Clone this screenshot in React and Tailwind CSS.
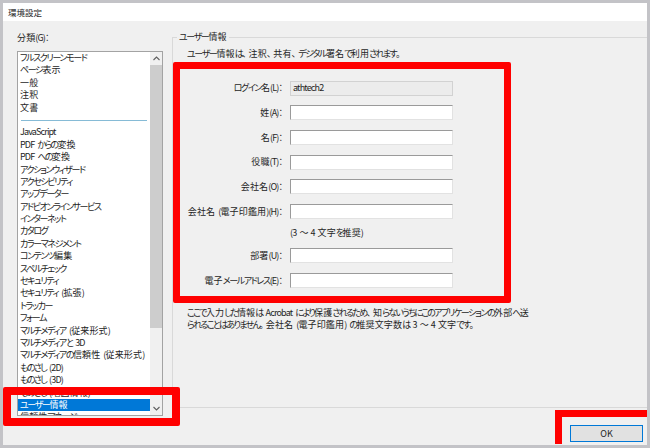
import React from 'react';

const categories = [
  'フルスクリーンモード',
  'ページ表示',
  '一般',
  '注釈',
  '文書',
  '---',
  'JavaScript',
  'PDF からの変換',
  'PDF への変換',
  'アクションウィザード',
  'アクセシビリティ',
  'アップデーター',
  'アドビオンラインサービス',
  'インターネット',
  'カタログ',
  'カラーマネジメント',
  'コンテンツ編集',
  'スペルチェック',
  'セキュリティ',
  'セキュリティ (拡張)',
  'トラッカー',
  'フォーム',
  'マルチメディア (従来形式)',
  'マルチメディアと 3D',
  'マルチメディアの信頼性 (従来形式)',
  'ものさし (2D)',
  'ものさし (3D)',
  'ものさし (地図情報)',
  'ユーザー情報',
  '信頼性マネージャー',
];

const fields = [
  { label: 'ログイン名(L)：', value: 'athtech2', disabled: true },
  { label: '姓(A)：' },
  { label: '名(F)：' },
  { label: '役職(T)：' },
  { label: '会社名(O)：' },
  { label: '会社名 (電子印鑑用)(H)：', hint: '(3 ～ 4 文字を推奨)' },
  { label: '部署(U)：' },
  { label: '電子メールアドレス(E)：' },
];

const runClass = (ch) => {
  if (/[\u4e00-\u9fff]/.test(ch)) return 'tracking-[0.15px]';
  if (/[\u3040-\u309f]/.test(ch)) return 'tracking-[-1.7px]';
  if (/[\u30a0-\u30ff]/.test(ch)) return 'tracking-[-1.4px]';
  if (ch === '～') return 'tracking-[-1px]';
  if (/[\u3000-\u303f\uff00-\uffef]/.test(ch)) return 'tracking-[2px]';
  if (ch === ' ') return 'tracking-[1px]';
  return 'tracking-[-0.85px]';
};

const Jp = ({ text }) => {
  const runs = [];
  for (const ch of text) {
    const cls = runClass(ch);
    const last = runs[runs.length - 1];
    if (last && last.cls === cls) last.text += ch;
    else runs.push({ cls, text: ch });
  }
  return runs.map((r, i) => (
    <span key={i} className={r.cls}>
      {r.text}
    </span>
  ));
};

const Chevron = ({ up }) => (
  <svg width="7" height="5" viewBox="0 0 7 5" fill="none">
    <polyline
      points={up ? '0.5,4 3.5,1 6.5,4' : '0.5,1 3.5,4 6.5,1'}
      stroke="#5f5f5f"
      strokeWidth="1.1"
    />
  </svg>
);

const App = () => {
  return (
    <div className="relative h-[448px] w-[650px] overflow-hidden bg-[#c3c3c7] p-[3px] font-['Noto_Sans_CJK_JP',sans-serif] text-[9px] text-[#1e1e1e] [font-feature-settings:'palt']">
      <div className="flex h-full flex-col bg-[#f0f0f0]">
        {/* title bar */}
        <div className="flex h-[18px] items-center bg-white pl-[5px] text-[8.5px]">環境設定</div>

        <div className="flex">
          {/* category list */}
          <div className="flex flex-col pl-[14px] pt-[11px]">
            <div className="h-[12px] leading-[12px]">
              <Jp text="分類(G)：" />
            </div>
            <div className="mt-[7px] flex h-[365px] w-[146px] border border-[#a3a3a3] bg-white">
              <div className="w-[132px] overflow-hidden">
                {categories.map((c, i) =>
                  c === '---' ? (
                    <div key={i} className="flex h-[12.4px] items-center px-[3px]">
                      <div className="h-[1px] w-full bg-[#86bbd6]" />
                    </div>
                  ) : (
                    <div
                      key={i}
                      className={
                        c === 'ユーザー情報'
                          ? 'h-[12.4px] whitespace-nowrap bg-[#0078d7] pl-[2px] leading-[12.4px] text-white'
                          : 'h-[12.4px] whitespace-nowrap pl-[2px] leading-[12.4px]'
                      }
                    >
                      <Jp text={c} />
                    </div>
                  )
                )}
              </div>
              <div className="flex w-[12px] flex-col bg-[#f0f0f0]">
                <div className="flex h-[13px] items-center justify-center">
                  <Chevron up />
                </div>
                <div className="h-[263px] bg-[#cdcdcd]" />
                <div className="flex-1" />
                <div className="flex h-[13px] items-center justify-center">
                  <Chevron />
                </div>
              </div>
            </div>
          </div>

          {/* user info group */}
          <fieldset className="ml-[9px] mt-[10px] h-[377px] flex-1 border-y border-l border-[#d9d9d9]">
            <legend className="ml-[4px] px-[2px] leading-[12px]">
              <Jp text="ユーザー情報" />
            </legend>
            <div className="mt-[5px] pl-[14px] leading-[12px]">
              <Jp text="ユーザー情報は、注釈、共有、デジタル署名で利用されます。" />
            </div>

            <div className="mt-[20.5px] flex flex-col gap-[9.7px]">
              {fields.map((f) => (
                <React.Fragment key={f.label}>
                  <div className="flex h-[15px] items-center gap-[5px]">
                    <div className="w-[112px] whitespace-nowrap text-right">
                      <Jp text={f.label} />
                    </div>
                    {f.disabled ? (
                      <div className="flex h-[15px] w-[163px] items-center border border-[#d2d2d2] bg-[#ececec] pl-[2px]">
                        <Jp text={f.value} />
                      </div>
                    ) : (
                      <div className="h-[15px] w-[163px] border border-[#9a9a9a] border-b-[#e2e2e2] border-r-[#e2e2e2] bg-white" />
                    )}
                  </div>
                  {f.hint && (
                    <div className="-mt-[2px] h-[12px] pl-[117px] leading-[12px]">
                      <Jp text={f.hint} />
                    </div>
                  )}
                </React.Fragment>
              ))}
            </div>

            <div className="mt-[19px] whitespace-nowrap pl-[14px] leading-[12px]">
              <div>
                <Jp text="ここで入力した情報は Acrobat により保護されるため、知らないうちにこのアプリケーションの外部へ送" />
              </div>
              <div>
                <Jp text="られることはありません。会社名 (電子印鑑用) の推奨文字数は 3 ～ 4 文字です。" />
              </div>
            </div>
          </fieldset>
        </div>

        <div className="mt-[9px] flex justify-end pr-[4px]">
          <button className="h-[17px] w-[73px] border border-[#0078d7] bg-[#e1e1e1] leading-[15px]">OK</button>
        </div>
      </div>

      {/* red annotation frames */}
      <div className="pointer-events-none absolute left-[173px] top-[62px] h-[241px] w-[338px] rounded-[2px] border-[7px] border-[#ff0000]" />
      <div className="pointer-events-none absolute left-[3px] top-[387px] h-[39px] w-[177px] rounded-[2px] border-[8px] border-[#ff0000]" />
      <div className="pointer-events-none absolute left-[555px] top-[410px] h-[34px] w-[92px] border-l-[7px] border-t-[7px] border-[#ff0000]" />
    </div>
  );
};

export default App;
